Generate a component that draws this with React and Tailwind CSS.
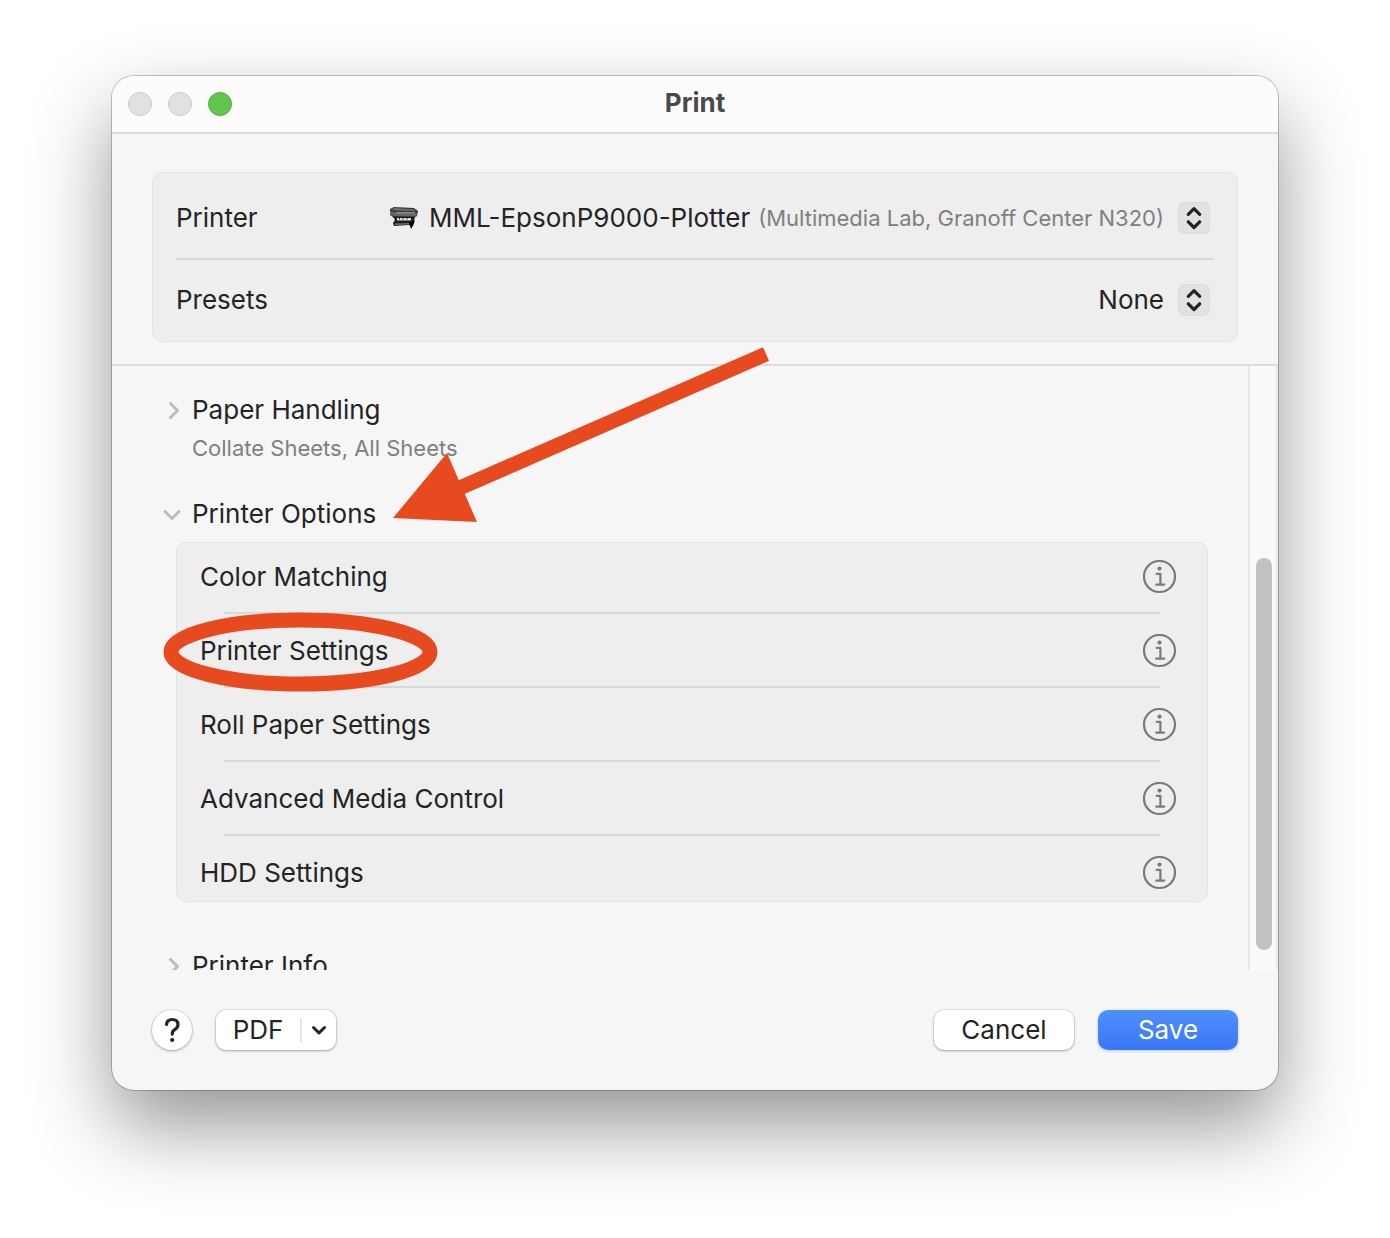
import React, { useState } from 'react';

const optionRows = [
  'Color Matching',
  'Printer Settings',
  'Roll Paper Settings',
  'Advanced Media Control',
  'HDD Settings',
];

const Stepper = () => (
  <span className="flex size-8 shrink-0 items-center justify-center rounded-[7px] bg-[#e2e2e2] shadow-[inset_0_0_0_1px_#dcdcdc] pointer-events-none">
    <svg className="size-8" viewBox="0 0 32 32" fill="none" stroke="#242424" strokeWidth="3.2" strokeLinecap="round" strokeLinejoin="round">
      <path d="M10.3 12.3L16 6.6l5.700 5.700M10.300 19.800l5.700 5.700 5.700-5.700" />
    </svg>
  </span>
);

const PlotterIcon = () => (
  <svg className="h-6 w-[30px] shrink-0" viewBox="0 0 30 24">
    <path d="M1 3l4-2 20 1 4 3-1 5-3 2H5L1 9z" fill="#3a3a3a" />
    <path d="M2 3.500l4-1.500 20 1.500v1.500L7 4.500z" fill="#6e6e6e" />
    <path d="M1 5l5 1.500 22 .5-1 4-19-.5L1 9z" fill="#666" />
    <path d="M7 6h19v1.500H7z" fill="#8c8c8c" />
    <path d="M4 10.500h22l-2 9.500-4-1-15 1-1-3 2-3z" fill="#1c1c1c" />
    <path d="M8 12h14v2.500H8z" fill="#dcdcdc" />
    <path d="M10 12h1v1.500h-1zM13.500 12h1v1.500h-1zM17.500 12h1v1.500h-1z" fill="#333" />
    <path d="M6 17.500l14-.5v1.500L6 19z" fill="#6f6f6f" />
    <path d="M20 16.500l6-2-2 5-2 3.500z" fill="#000" />
  </svg>
);

const Chevron = ({ open }) => (
  <svg className="size-6 shrink-0" viewBox="0 0 24 24" fill="none" stroke="#bcbcbc" strokeWidth="3" strokeLinecap="round" strokeLinejoin="round">
    {open ? <path d="M5 9.500l7 7 7-7" /> : <path d="M10.500 5.500l7 7-7 7" />}
  </svg>
);

const InfoIcon = () => (
  <svg className="size-[34px]" viewBox="0 0 34 34" fill="none" stroke="#7a7a7a">
    <circle cx="16.500" cy="16.500" r="15.500" strokeWidth="2.200" />
    <circle cx="16.500" cy="8.600" r="2.100" fill="#7a7a7a" stroke="none" />
    <path d="M13.700 13.800h3.700v10.700M13.200 24.600h8" strokeWidth="2.200" strokeLinecap="round" strokeLinejoin="round" />
  </svg>
);

const Section = ({ title, open, onClick }) => (
  <button type="button" aria-expanded={open} onClick={onClick} className="flex h-8 items-center gap-2 text-left">
    <Chevron open={open} />
    {title}
  </button>
);

// callouts for the Printer Options section and its Printer Settings row
const Callouts = () => (
  <svg className="pointer-events-none absolute left-12 top-[260px] h-[370px] w-[620px]" viewBox="160 336 620 370" fill="none">
    <path d="M766 354L455 490" stroke="#e84a20" strokeWidth="15" />
    <path d="M393 518l54-65 30 69z" fill="#e84a20" />
    <ellipse cx="300.500" cy="652" rx="129.500" ry="32" stroke="#e84a20" strokeWidth="15" />
  </svg>
);

export default function App() {
  const [optionsOpen, setOptionsOpen] = useState(true);
  const [handlingOpen, setHandlingOpen] = useState(false);

  return (
    <div className="min-h-screen bg-white px-28 pt-[76px] pb-[148px] font-['Inter','Liberation_Sans',sans-serif] text-[26px] leading-8 text-[#242424]">
      <main className="relative rounded-[22px] bg-[#f6f6f6] shadow-[0_0_0_1px_rgba(0,0,0,0.22),0_36px_80px_rgba(0,0,0,0.42)]">
        <header className="grid h-[58px] grid-cols-[1fr_auto_1fr] items-center rounded-t-[22px] border-b-2 border-[#dadada] bg-[#fcfcfc] px-4">
          <div className="flex gap-4">
            <button type="button" aria-label="Close" className="size-6 rounded-full border border-[#c6c6c6] bg-[#e1e1e1]" />
            <button type="button" aria-label="Minimize" className="size-6 rounded-full border border-[#c6c6c6] bg-[#e1e1e1]" />
            <button type="button" aria-label="Zoom" className="size-6 rounded-full border border-[#58ad3d] bg-[#63c54c]" />
          </div>
          <h1 className="pb-0.5 font-bold text-[#4a4a4a]">Print</h1>
        </header>

        <div className="border-b-2 border-[#dddddd] px-10 pt-[38px] pb-[22px]">
          <div className="rounded-[10px] border border-[#e4e4e4] bg-[#eeeeee] px-[23px]">
            <div className="flex h-[87px] items-center justify-between border-b-2 border-[#d8d8d8] pr-1 pt-1">
              <label htmlFor="printer">Printer</label>
              <div className="flex items-center">
                <PlotterIcon />
                <select id="printer" className="ml-2.5 appearance-none field-sizing-content bg-transparent">
                  <option>MML-EpsonP9000-Plotter</option>
                </select>
                <span className="ml-2 mr-3.5 text-[22px] text-[#808080]">(Multimedia Lab, Granoff Center N320)</span>
                <Stepper />
              </div>
            </div>
            <div className="flex h-[81px] items-center justify-between pr-1 pb-0.5">
              <label htmlFor="presets">Presets</label>
              <div className="flex items-center gap-3.5">
                <select id="presets" className="appearance-none field-sizing-content bg-transparent">
                  <option>None</option>
                </select>
                <Stepper />
              </div>
            </div>
          </div>
        </div>

        <div className="flex h-[604px] overflow-hidden">
          <div className="flex-1 pl-12 pr-10 pt-7">
            <Section title="Paper Handling" open={handlingOpen} onClick={() => setHandlingOpen(!handlingOpen)} />
            <p className="pl-8 pt-1.5 text-[22px] text-[#808080]">Collate Sheets, All Sheets</p>

            <div className="mt-[34px]">
              <Section title="Printer Options" open={optionsOpen} onClick={() => setOptionsOpen(!optionsOpen)} />
            </div>
            {optionsOpen && (
              <ul className="ml-4 mt-3 rounded-[10px] border border-[#e4e4e4] bg-[#eeeeee] pt-[17px] pb-[11px] pl-[23px] pr-[30px]">
                {optionRows.map((name, index) => (
                  <li key={name}>
                    <div className="flex items-center justify-between">
                      <span>{name}</span>
                      <button type="button" aria-label={`About ${name}`}>
                        <InfoIcon />
                      </button>
                    </div>
                    {index < optionRows.length - 1 && <hr className="ml-6 mr-[17px] mt-[18px] mb-5 border-t-2 border-[#d8d8d8]" />}
                  </li>
                ))}
              </ul>
            )}

            <div className="mt-12">
              <Section title="Printer Info" open={false} />
            </div>
          </div>
          <div className="w-[30px] border-x-2 border-[#e8e8e8] bg-[#fafafa] pl-1.5 pt-48">
            <div className="h-[392px] w-4 rounded-full bg-[#c1c1c1]" />
          </div>
        </div>

        <footer className="flex items-center p-10">
          <button type="button" aria-label="Help" className="flex size-10 items-center justify-center rounded-full bg-white shadow-[0_0_0_1px_rgba(0,0,0,0.06),0_1px_3px_rgba(0,0,0,0.3)]">
            <svg className="size-10" viewBox="0 0 40 40" fill="none" stroke="#242424" strokeWidth="3.200" strokeLinecap="round" strokeLinejoin="round">
              <path d="M14.500 14.500c.3-3.200 2.600-5 5.700-5 3.400 0 5.800 1.900 5.800 5 0 2.300-1.100 3.700-3 4.900-2 1.300-2.700 2.200-2.700 4.100v.6" />
              <circle cx="20.200" cy="30" r="2.100" fill="#242424" stroke="none" />
            </svg>
          </button>
          <div className="ml-6 flex h-10 w-[120px] items-center rounded-[10px] bg-white shadow-[0_0_0_1px_rgba(0,0,0,0.06),0_1px_3px_rgba(0,0,0,0.3)]">
            <button type="button" className="flex-1">PDF</button>
            <button type="button" aria-label="PDF options" className="flex h-6 w-9 items-center justify-center border-l-2 border-[#e5e5e5]">
              <svg className="h-3 w-4" viewBox="0 0 16 12" fill="none" stroke="#242424" strokeWidth="3" strokeLinecap="round" strokeLinejoin="round">
                <path d="M2.500 3.500L8 9l5.500-5.500" />
              </svg>
            </button>
          </div>
          <div className="ml-auto flex gap-6">
            <button type="button" className="h-10 w-[140px] rounded-[10px] bg-white shadow-[0_0_0_1px_rgba(0,0,0,0.06),0_1px_3px_rgba(0,0,0,0.3)]">Cancel</button>
            <button type="button" className="h-10 w-[140px] rounded-[10px] bg-linear-to-b from-[#4f8ffb] to-[#3b76f8] text-white shadow-[0_1px_3px_rgba(59,118,248,0.35)]">Save</button>
          </div>
        </footer>

        <Callouts />
      </main>
    </div>
  );
}
